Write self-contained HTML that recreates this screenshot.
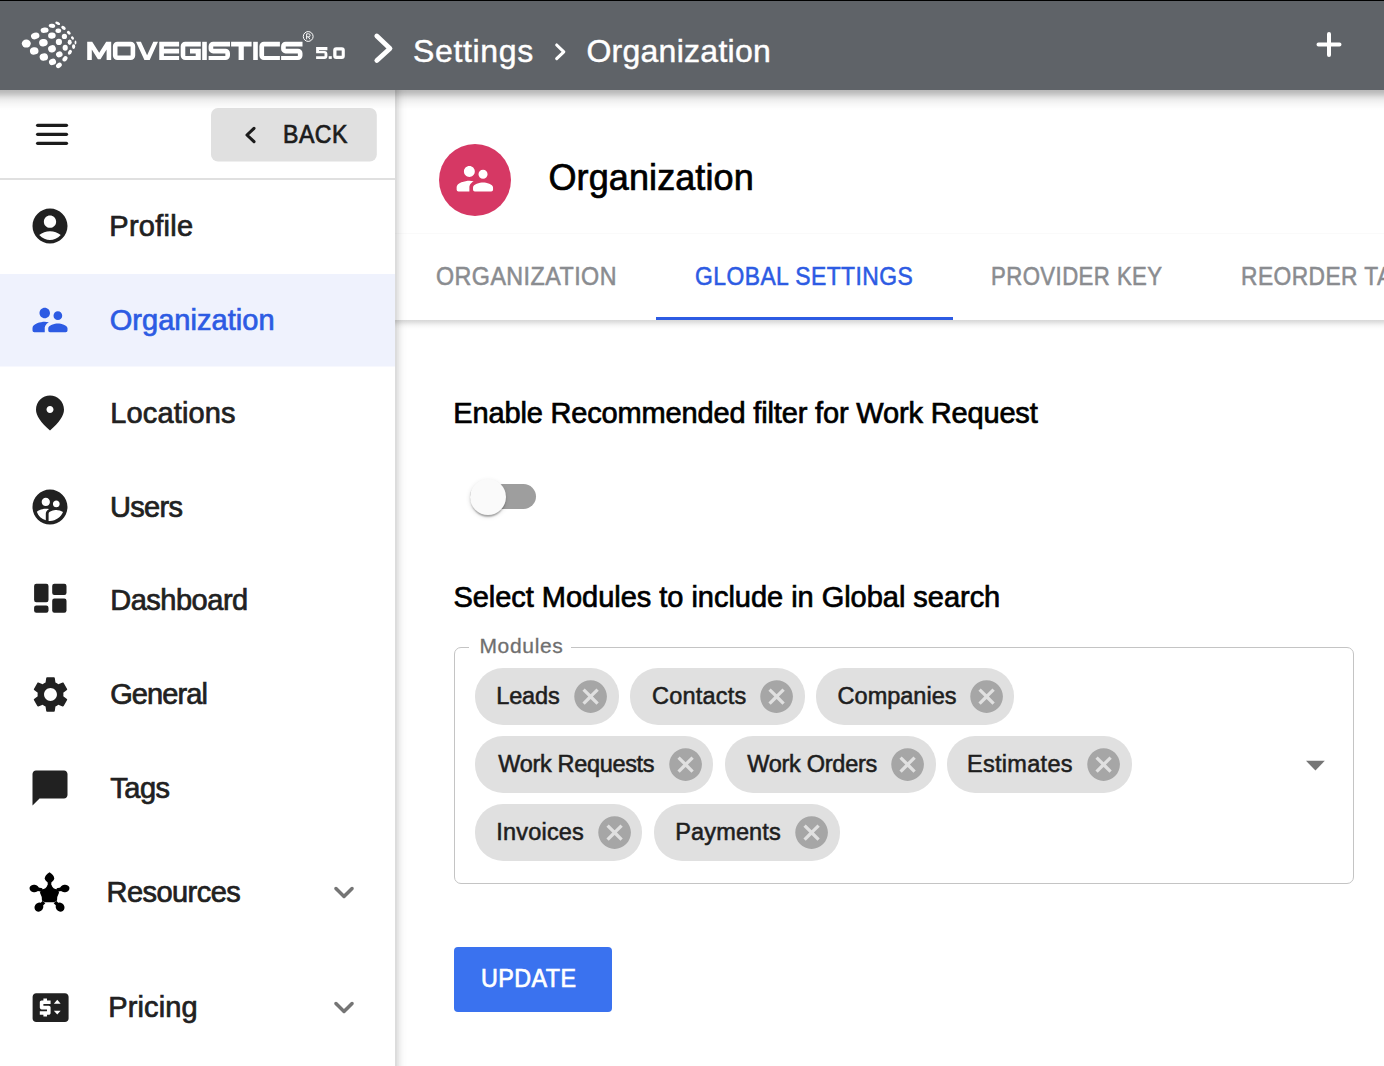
<!DOCTYPE html>
<html>
<head>
<meta charset="utf-8">
<style>
*{box-sizing:border-box;margin:0;padding:0}
html,body{width:1384px;height:1066px;overflow:hidden;background:#fff}
body{position:relative;font-family:"Liberation Sans",sans-serif;color:#212121}
.abs{position:absolute}
.t{position:absolute;white-space:nowrap;line-height:1}
.med{-webkit-text-stroke:0.35px currentColor}
#topline{left:0;top:0;width:1384px;height:1px;background:#000}
#header{left:0;top:1px;width:1384px;height:89px;background:#5f6368;z-index:5}
#hshadow{left:0;top:90px;width:1384px;height:20px;z-index:4;background:linear-gradient(to bottom,rgba(0,0,0,0.28) 0px,rgba(0,0,0,0.26) 2px,rgba(0,0,0,0.19) 5px,rgba(0,0,0,0.13) 7px,rgba(0,0,0,0.07) 10px,rgba(0,0,0,0.03) 14px,rgba(0,0,0,0.008) 18px,rgba(0,0,0,0) 20px)}
#sidebar{left:0;top:90px;width:395px;height:976px;background:#fff}
#sshadow{left:395px;top:90px;width:12px;height:976px;z-index:3;background:linear-gradient(to right,rgba(0,0,0,0.137) 0px,rgba(0,0,0,0.137) 1px,rgba(0,0,0,0.133) 1px,rgba(0,0,0,0.133) 2px,rgba(0,0,0,0.102) 2px,rgba(0,0,0,0.102) 3px,rgba(0,0,0,0.09) 3px,rgba(0,0,0,0.09) 4px,rgba(0,0,0,0.063) 4px,rgba(0,0,0,0.063) 5px,rgba(0,0,0,0.051) 5px,rgba(0,0,0,0.051) 6px,rgba(0,0,0,0.035) 6px,rgba(0,0,0,0.035) 7px,rgba(0,0,0,0.024) 7px,rgba(0,0,0,0.024) 8px,rgba(0,0,0,0.016) 8px,rgba(0,0,0,0.016) 9px,rgba(0,0,0,0.008) 9px,rgba(0,0,0,0.008) 10px,rgba(0,0,0,0.008) 10px,rgba(0,0,0,0.008) 11px,rgba(0,0,0,0.004) 11px,rgba(0,0,0,0.004) 12px)}
.icon{position:absolute;width:42px;height:42px}
.hd{color:#fff;z-index:6;-webkit-text-stroke-width:0.45px}
.lbl{position:absolute;white-space:nowrap;line-height:1;font-size:29px;color:#212121;-webkit-text-stroke-width:0.7px}
.lbl.tab{font-size:25px;color:#8a8c90;z-index:2;-webkit-text-stroke-width:0.55px}
.lbl.blue{color:#2d5be3}
.chip{height:57px;border-radius:28px;background:#e0e0e0}
.lbl.chipt{font-size:23.5px;color:#1e1e1e;-webkit-text-stroke-width:0.55px}
</style>
</head>
<body>
<div id="topline" class="abs"></div>
<div id="header" class="abs"></div>
<svg class="abs" style="left:0;top:0;z-index:6" width="90" height="90" viewBox="0 0 90 90">
    <g fill="#fff">
      <ellipse cx="26.3" cy="43.6" rx="4.5" ry="4"/>
      <ellipse cx="35.2" cy="35.9" rx="4.3" ry="3.3" transform="rotate(-15 35.2 35.9)"/>
      <ellipse cx="34.2" cy="50.9" rx="4.3" ry="3.7" transform="rotate(-10 34.2 50.9)"/>
      <ellipse cx="44.6" cy="30.2" rx="4" ry="2.7" transform="rotate(-8 44.6 30.2)"/>
      <ellipse cx="43.4" cy="42.7" rx="4.3" ry="3.7" transform="rotate(-12 43.4 42.7)"/>
      <ellipse cx="43.8" cy="57" rx="4.2" ry="3.7" transform="rotate(-12 43.8 57)"/>
      <ellipse cx="52" cy="25.8" rx="3.3" ry="2" transform="rotate(10 52 25.8)"/>
      <ellipse cx="51.9" cy="35.6" rx="3.8" ry="3.1" transform="rotate(-5 51.9 35.6)"/>
      <ellipse cx="52" cy="48.8" rx="3.9" ry="3.6" transform="rotate(-20 52 48.8)"/>
      <ellipse cx="52.5" cy="61.9" rx="3.6" ry="3.1" transform="rotate(-20 52.5 61.9)"/>
      <ellipse cx="57.7" cy="23.3" rx="2.6" ry="1.4" transform="rotate(25 57.7 23.3)"/>
      <ellipse cx="58.3" cy="30.8" rx="2.9" ry="2.2" transform="rotate(5 58.3 30.8)"/>
      <ellipse cx="58.9" cy="41.9" rx="3.1" ry="3.1"/>
      <ellipse cx="59.3" cy="54.4" rx="3.3" ry="3" transform="rotate(-25 59.3 54.4)"/>
      <ellipse cx="58.9" cy="65.4" rx="3.1" ry="2.4" transform="rotate(-35 58.9 65.4)"/>
      <ellipse cx="63.5" cy="27.9" rx="2.5" ry="1.6" transform="rotate(35 63.5 27.9)"/>
      <ellipse cx="64.4" cy="36.4" rx="2.6" ry="2.6"/>
      <ellipse cx="65.2" cy="47.8" rx="2.6" ry="3"/>
      <ellipse cx="65" cy="58.8" rx="2.9" ry="2.2" transform="rotate(-50 65 58.8)"/>
      <ellipse cx="68.8" cy="32.8" rx="2.2" ry="1.5" transform="rotate(45 68.8 32.8)"/>
      <ellipse cx="69.7" cy="42.2" rx="2" ry="2.7"/>
      <ellipse cx="69.9" cy="52.3" rx="2.6" ry="1.7" transform="rotate(-55 69.9 52.3)"/>
      <ellipse cx="72.5" cy="38" rx="1.8" ry="1.3" transform="rotate(55 72.5 38)"/>
      <ellipse cx="73.6" cy="46.6" rx="1.6" ry="2.4"/>
      <ellipse cx="75.5" cy="42.5" rx="0.9" ry="2"/>
    </g>
</svg>
<svg class="abs" style="left:0;top:0;z-index:6" width="360" height="90" viewBox="0 0 360 90"><g fill="#fff" fill-rule="evenodd">
<path d="M87.2 60V41.8H92.2L99.2 52.8L106.2 41.8H111.2V60H106.6V49.6L100.5 59.2H97.9L91.8 49.6V60Z"/>
<path d="M117.4 41.8H130.7A4.5 4.5 0 0 1 135.2 46.3V55.5A4.5 4.5 0 0 1 130.7 60H117.4A4.5 4.5 0 0 1 112.9 55.5V46.3A4.5 4.5 0 0 1 117.4 41.8ZM117.5 46.4V55.4H130.6V46.4Z"/>
<path d="M136 41.8H140.9L147.1 55.2L153.3 41.8H158L149.7 60H144.4Z"/>
<path d="M159.25 41.8H179.1V46.5H163.9V48.8H179.1V53.4H163.9V55.9H179.1V60H159.25Z"/>
<path d="M185.2 41.8H200.8V46.5H185.3V55.9H195.7V53.4H190V48.8H200.8V60H185.2A4.5 4.5 0 0 1 180.7 55.5V46.3A4.5 4.5 0 0 1 185.2 41.8Z"/>
<rect x="202.2" y="41.8" width="4.6" height="18.2"/>
<path d="M213.1 41.8H230V46.5H213.25V48.8H225.5A4.5 4.5 0 0 1 230 53.3V55.5A4.5 4.5 0 0 1 225.5 60H208.6V55.9H225.35V53.4H213.1A4.5 4.5 0 0 1 208.6 48.9V46.3A4.5 4.5 0 0 1 213.1 41.8Z"/>
<path d="M231.1 41.8H251.6V46.5H243.8V60H238.6V46.5H231.1Z"/>
<rect x="253.2" y="41.8" width="4.6" height="18.2"/>
<path d="M263.9 41.8H279.9V46.6H264.1V55.9H279.9V60H263.9A4.5 4.5 0 0 1 259.4 55.5V46.3A4.5 4.5 0 0 1 263.9 41.8Z"/>
<path d="M285.6 41.8H302.5V46.5H285.75V48.8H298A4.5 4.5 0 0 1 302.5 53.3V55.5A4.5 4.5 0 0 1 298 60H281.1V55.9H297.85V53.4H285.6A4.5 4.5 0 0 1 281.1 48.9V46.3A4.5 4.5 0 0 1 285.6 41.8Z"/>
<path d="M316.1 47.1H327.4V50.2H319V51.1H324.4A3 3 0 0 1 327.4 54.1V55.9A3 3 0 0 1 324.4 58.9H316.1V56.2H324.5V53.3H316.1Z"/>
<rect x="328.7" y="56.2" width="3.1" height="2.7"/>
<path d="M336.2 47.3H341.8A3 3 0 0 1 344.8 50.3V55.9A3 3 0 0 1 341.8 58.9H336.2A3 3 0 0 1 333.2 55.9V50.3A3 3 0 0 1 336.2 47.3ZM336.5 50.4V55.8H341.7V50.4Z"/>
</g>
<circle cx="308.2" cy="36.5" r="4.9" fill="none" stroke="#fff" stroke-width="1"/>
<path d="M306.6 39.3V33.8H308.6A1.5 1.5 0 0 1 308.6 36.8H306.6M308.3 36.8L310 39.3" fill="none" stroke="#fff" stroke-width="0.95"/>
</svg>
<svg class="abs" style="left:360px;top:0;z-index:6" width="50" height="90" viewBox="0 0 50 90">
    <polyline points="16.8,36 30,48.4 16.8,60.5" fill="none" stroke="#fff" stroke-width="4.8" stroke-linecap="round" stroke-linejoin="round"/>
</svg>
<div class="t hd" style="left:412.9px;top:34.9px;font-size:32px;letter-spacing:0.69px">Settings</div>
<svg class="abs" style="left:540px;top:0;z-index:6" width="40" height="90" viewBox="0 0 40 90">
    <polyline points="16.7,45 23.8,51.9 16.7,58.7" fill="none" stroke="#fff" stroke-width="3.1" stroke-linecap="round" stroke-linejoin="round"/>
</svg>
<div class="t hd" style="left:586.4px;top:35.1px;font-size:32px;letter-spacing:0.27px">Organization</div>
<svg class="abs" style="left:1300px;top:0;z-index:6" width="60" height="90" viewBox="0 0 60 90">
    <path d="M29 34V55M18.5 44.4H39.5" fill="none" stroke="#fff" stroke-width="4" stroke-linecap="round"/>
</svg>
<div id="hshadow" class="abs"></div>

<div id="sidebar" class="abs">
</div>
<!-- hamburger -->
<svg class="abs" style="left:0;top:90px" width="395" height="976" viewBox="0 90 395 976">
  <g stroke="#1c1c1c" stroke-width="3.2" stroke-linecap="round">
    <line x1="37.6" y1="125.3" x2="66.5" y2="125.3"/>
    <line x1="37.6" y1="134.3" x2="66.5" y2="134.3"/>
    <line x1="37.6" y1="143.3" x2="66.5" y2="143.3"/>
  </g>
  <rect x="211" y="108" width="165.8" height="53.6" rx="7" fill="#e0e0e0"/>
  <polyline points="254,128.3 247,135 254,141.7" fill="none" stroke="#1c1c1c" stroke-width="3.1" stroke-linecap="round" stroke-linejoin="round"/>
  <rect x="0" y="178" width="395" height="2" fill="#e0e0e0"/>
  <rect x="0" y="274" width="395" height="92.5" fill="#eff2fd"/>
</svg>
<div class="lbl" style="left:283px;top:121.7px;font-size:25px;letter-spacing:0.5px;color:#1c1c1c;transform:scaleX(0.925);transform-origin:0 0">BACK</div>

<svg class="icon" style="left:29px;top:205.3px" viewBox="0 0 24 24"><path fill="#212121" d="M12 2C6.48 2 2 6.48 2 12s4.48 10 10 10 10-4.48 10-10S17.52 2 12 2zm0 4c1.93 0 3.5 1.57 3.5 3.5S13.93 13 12 13s-3.5-1.57-3.5-3.5S10.07 6 12 6zm0 14c-2.03 0-4.43-.82-6.14-2.88C7.55 15.8 9.68 15 12 15s4.45.8 6.14 2.12C16.43 19.18 14.03 20 12 20z"/></svg>
<div class="lbl" style="left:109.3px;top:212.2px;letter-spacing:0.27px">Profile</div>

<svg class="icon" style="left:29.2px;top:299.3px" viewBox="0 0 24 24"><path fill="#2d5be3" d="M16.5 12c1.38 0 2.49-1.12 2.49-2.5S17.88 7 16.5 7C15.12 7 14 8.12 14 9.5s1.12 2.5 2.5 2.5zM9 11c1.66 0 2.99-1.34 2.99-3S10.66 5 9 5C7.34 5 6 6.34 6 8s1.34 3 3 3zm7.5 3c-1.83 0-5.5.92-5.5 2.75V18a1 1 0 0 0 1 1h9a1 1 0 0 0 1-1v-1.25c0-1.83-3.67-2.75-5.5-2.75zM9 13c-2.33 0-7 1.17-7 3.5V18a1 1 0 0 0 1 1h6v-2.25c0-.85.33-2.34 2.37-3.47C10.5 13.1 9.66 13 9 13z"/></svg>
<div class="lbl" style="left:109.7px;top:306.2px;letter-spacing:0.05px;color:#2d5be3">Organization</div>

<svg class="icon" style="left:29px;top:391.8px" viewBox="0 0 24 24"><path fill="#212121" d="M12 2c-4.2 0-8 3.22-8 8.2 0 3.32 2.67 7.25 8 11.8 5.33-4.55 8-8.48 8-11.8C20 5.22 16.2 2 12 2zm0 10c-1.1 0-2-.9-2-2s.9-2 2-2 2 .9 2 2-.9 2-2 2z"/></svg>
<div class="lbl" style="left:110.2px;top:399.0px;letter-spacing:0.15px">Locations</div>

<svg class="icon" style="left:29px;top:486px" viewBox="0 0 24 24"><path fill="#212121" d="M11.99 2c-5.52 0-10 4.48-10 10s4.48 10 10 10 10-4.48 10-10-4.48-10-10-10zm3.61 6.34c1.07 0 1.93.86 1.93 1.93 0 1.07-.86 1.93-1.93 1.93-1.07 0-1.93-.86-1.93-1.93-.01-1.07.86-1.93 1.930-1.93zm-6-1.58c1.3 0 2.36 1.06 2.36 2.36 0 1.3-1.06 2.36-2.36 2.36s-2.36-1.06-2.36-2.36c0-1.31 1.05-2.36 2.36-2.36zm0 9.13v3.75c-2.4-.75-4.3-2.6-5.14-4.960 1.05-1.12 3.67-1.69 5.14-1.69.53 0 1.2.08 1.9.22-1.64.87-1.9 2.02-1.9 2.68zM11.99 20c-.27 0-.53-.01-.79-.04v-4.07c0-1.42 2.94-2.13 4.4-2.13 1.07 0 2.92.39 3.84 1.15-1.17 2.9-4.01 4.96-7.45 5.09z"/></svg>
<div class="lbl" style="left:109.9px;top:493.1px;letter-spacing:-0.65px">Users</div>

<svg class="abs" style="left:0;top:575px" width="80" height="50" viewBox="0 575 80 50"><g fill="#212121">
  <rect x="34.1" y="583.8" width="14.4" height="18.4" rx="2.2"/>
  <rect x="34.1" y="605.6" width="14.4" height="7.2" rx="2.2"/>
  <rect x="52.2" y="583.8" width="14.3" height="11.1" rx="2.2"/>
  <rect x="52.2" y="598.5" width="14.3" height="14.3" rx="2.2"/>
</g></svg>
<div class="lbl" style="left:110.2px;top:586.1px;letter-spacing:-0.48px">Dashboard</div>

<svg class="icon" style="left:28.8px;top:672.8px;width:43px;height:43px" viewBox="0 0 24 24"><path fill="#212121" d="M19.14 12.94c.04-.3.06-.61.06-.94 0-.32-.02-.64-.07-.94l2.03-1.58c.18-.14.23-.41.12-.61l-1.92-3.32c-.12-.22-.37-.29-.59-.22l-2.39.96c-.5-.38-1.03-.7-1.62-.94l-.36-2.54c-.04-.24-.24-.41-.48-.41h-3.84c-.24 0-.43.17-.47.41l-.36 2.54c-.59.24-1.13.57-1.62.94l-2.39-.96c-.22-.08-.47 0-.59.22L2.74 8.87c-.12.21-.08.47.12.61l2.03 1.58c-.05.3-.09.63-.09.94s.02.64.07.94l-2.03 1.58c-.18.14-.23.41-.12.61l1.92 3.32c.12.22.37.29.59.22l2.39-.96c.5.38 1.03.7 1.62.94l.36 2.54c.05.24.24.41.48.41h3.84c.24 0 .44-.17.47-.41l.36-2.54c.59-.24 1.13-.56 1.62-.94l2.39.96c.22.08.47 0 .59-.22l1.92-3.32c.12-.22.07-.47-.12-.61l-2.01-1.58zM12 15.6c-1.98 0-3.6-1.62-3.6-3.6s1.62-3.6 3.6-3.6 3.6 1.62 3.6 3.6-1.62 3.6-3.6 3.6z"/></svg>
<div class="lbl" style="left:110.2px;top:679.8px;letter-spacing:-0.92px">General</div>

<svg class="icon" style="left:29.3px;top:767.3px" viewBox="0 0 24 24"><path fill="#212121" d="M20 2H4c-1.1 0-2 .9-2 2v18l4-4h14c1.1 0 2-.9 2-2V4c0-1.1-.9-2-2-2z"/></svg>
<div class="lbl" style="left:110.2px;top:773.7px;letter-spacing:-0.46px">Tags</div>

<svg class="abs" style="left:20px;top:865px" width="60" height="60" viewBox="20 865 60 60"><g fill="#000">
  <path d="M47.60 885.00L51.40 885.00Q52.97 889.36 57.61 889.20L59.02 892.73Q56.8 896.5 57.05 900.58L54.13 902.3Q49.50 902.3 44.87 902.3L41.95 900.58Q42.2 896.5 39.98 892.73L41.39 889.20Q46.03 889.36 47.60 885.00Z"/>
  <g stroke="#000" stroke-width="3.6">
  <path d="M49.5 886L49.5 878"/><path d="M57 890L64.7 888.4"/><path d="M55 902L60.1 907.2"/><path d="M44 902L38.9 907.2"/><path d="M42 890L34.3 888.4"/>
  </g>
  <path d="M49.5 872.2C46.5 874.2 44.8 876.3 44.8 878.2C44.8 880.2 46.6 881.8 49.5 883.2C52.4 881.8 54.2 880.2 54.2 878.2C54.2 876.3 52.5 874.2 49.5 872.2Z"/>
  <ellipse cx="34.2" cy="888.5" rx="4.7" ry="3.8" transform="rotate(8 34.2 888.5)"/>
  <ellipse cx="64.8" cy="888.5" rx="4.7" ry="3.8" transform="rotate(-8 64.8 888.5)"/>
  <ellipse cx="38.9" cy="907.1" rx="4.3" ry="4.7" transform="rotate(35 38.9 907.1)"/>
  <ellipse cx="60.1" cy="907.1" rx="4.3" ry="4.7" transform="rotate(-35 60.1 907.1)"/>
</g></svg>
<div class="lbl" style="left:106.5px;top:878.0px;letter-spacing:-0.55px">Resources</div>
<svg class="icon" style="left:323.3px;top:871px" viewBox="0 0 24 24"><path fill="#757575" d="M15.88 9.29 12 13.17 8.12 9.29a.9959.9959 0 0 0-1.41 0c-.39.39-.39 1.02 0 1.41l4.59 4.59c.39.39 1.02.39 1.41 0l4.59-4.59c.39-.39.39-1.02 0-1.41-.39-.38-1.03-.39-1.42 0z"/></svg>

<svg class="icon" style="left:29.2px;top:986.3px;width:43.2px;height:43.2px" viewBox="0 0 24 24"><path fill="#212121" d="M20 4H4c-1.11 0-1.99.89-1.99 2L2 18c0 1.11.89 2 2 2h16c1.11 0 2-.89 2-2V6c0-1.11-.89-2-2-2zm-8 6H8v1h3c.55 0 1 .45 1 1v3c0 .55-.45 1-1 1h-1v1H8v-1H6v-2h4v-1H7c-.55 0-1-.45-1-1V9c0-.55.45-1 1-1h1V7h2v1h2v2z"/><path fill="#fff" d="M13.8 9.8L15.7 7.7L17.6 9.8ZM13.8 13.7L15.7 15.9L17.6 13.7Z"/></svg>
<div class="lbl" style="left:108.3px;top:993.2px;letter-spacing:0.1px">Pricing</div>
<svg class="icon" style="left:323.3px;top:986px" viewBox="0 0 24 24"><path fill="#757575" d="M15.88 9.29 12 13.17 8.12 9.29a.9959.9959 0 0 0-1.41 0c-.39.39-.39 1.02 0 1.41l4.59 4.59c.39.39 1.02.39 1.41 0l4.59-4.59c.39-.39.39-1.02 0-1.41-.39-.38-1.03-.39-1.42 0z"/></svg>
<div id="sshadow" class="abs"></div>


<div id="main" class="abs" style="left:397px;top:90px;width:987px;height:976px"></div>
<div class="abs" style="left:439.1px;top:143.8px;width:72px;height:72px;border-radius:50%;background:#d63864"></div>
<svg class="abs" style="left:453.2px;top:157px" width="43.7" height="43.7" viewBox="0 0 24 24"><path fill="#fff" d="M16.5 12c1.38 0 2.49-1.12 2.49-2.5S17.88 7 16.5 7C15.12 7 14 8.12 14 9.5s1.12 2.5 2.5 2.5zM9 11c1.66 0 2.99-1.34 2.99-3S10.66 5 9 5C7.34 5 6 6.34 6 8s1.34 3 3 3zm7.5 3c-1.83 0-5.5.92-5.5 2.75V18a1 1 0 0 0 1 1h9a1 1 0 0 0 1-1v-1.25c0-1.83-3.67-2.75-5.5-2.75zM9 13c-2.33 0-7 1.17-7 3.5V18a1 1 0 0 0 1 1h6v-2.25c0-.85.33-2.34 2.37-3.47C10.5 13.1 9.66 13 9 13z"/></svg>
<div class="lbl" style="left:548.5px;top:160.2px;font-size:36px;letter-spacing:0.1px;color:#000">Organization</div>

<div id="tabbar" class="abs" style="left:395px;top:233px;width:989px;height:87px;background:#fff;border-top:1px solid rgba(0,0,0,0.018);z-index:1"></div>
<div class="abs" style="left:395px;top:320px;width:989px;height:10px;z-index:1;background:linear-gradient(to bottom,rgba(0,0,0,0.155) 0px,rgba(0,0,0,0.12) 2px,rgba(0,0,0,0.07) 4px,rgba(0,0,0,0.03) 6px,rgba(0,0,0,0.01) 8px,rgba(0,0,0,0) 10px)"></div>
<div class="lbl tab" style="left:435.7px;top:263.7px;letter-spacing:0.5px;transform:scaleX(0.9304);transform-origin:0 0">ORGANIZATION</div>
<div class="lbl tab blue" style="left:695.4px;top:263.6px;letter-spacing:0.5px;transform:scaleX(0.9148);transform-origin:0 0">GLOBAL SETTINGS</div>
<div class="lbl tab" style="left:991.3px;top:263.8px;letter-spacing:0.5px;transform:scaleX(0.8864);transform-origin:0 0">PROVIDER KEY</div>
<div class="lbl tab" style="left:1241px;top:263.8px;letter-spacing:0.5px;transform:scaleX(0.91);transform-origin:0 0">REORDER TABS</div>
<div class="abs" style="left:655.6px;top:317px;width:297.2px;height:3px;background:#2d5be3;z-index:2"></div>

<div class="lbl" style="left:453.3px;top:398.7px;letter-spacing:-0.16px;color:#000">Enable Recommended filter for Work Request</div>
<!-- toggle -->
<div class="abs" style="left:470px;top:483.8px;width:66px;height:25.2px;border-radius:12.6px;background:#9e9e9e"></div>
<div class="abs" style="left:470px;top:479px;width:36px;height:36px;border-radius:50%;background:#fafafa;box-shadow:0 3.5px 1.75px -1.75px rgba(0,0,0,0.2),0 1.75px 1.75px 0 rgba(0,0,0,0.14),0 1.75px 5.25px 0 rgba(0,0,0,0.12)"></div>

<div class="lbl" style="left:453.4px;top:582.5px;letter-spacing:-0.03px;color:#000">Select Modules to include in Global search</div>

<!-- outlined autocomplete -->
<div class="abs" style="left:454px;top:647px;width:900px;height:237px;border:1.5px solid #c4c4c4;border-radius:7px"></div>
<div class="abs" style="left:468.9px;top:640px;width:102.6px;height:12px;background:#fff"></div>
<div class="lbl" style="left:479.4px;top:634.9px;font-size:21px;letter-spacing:0.68px;color:#6f6f6f;-webkit-text-stroke-width:0.3px">Modules</div>
<svg class="abs" style="left:1300px;top:755px" width="30" height="20" viewBox="1300 755 30 20"><polygon points="1306,760.8 1324.8,760.8 1315.4,770.4" fill="#757575"/></svg>

<div class="abs chip" style="left:475.1px;top:668.2px;width:143.7px"></div>
<div class="lbl chipt" style="left:496.2px;top:685.1px;letter-spacing:-0.12px">Leads</div>
<svg class="abs" style="left:571.2px;top:676.8px" width="39.2" height="39.2" viewBox="0 0 24 24"><path fill="#a6a6a6" d="M12 2C6.47 2 2 6.47 2 12s4.47 10 10 10 10-4.47 10-10S17.53 2 12 2zm5 13.59L15.59 17 12 13.41 8.41 17 7 15.59 10.59 12 7 8.41 8.41 7 12 10.59 15.59 7 17 8.41 13.41 12 17 15.59z"/></svg>
<div class="abs chip" style="left:630.2px;top:668.2px;width:174.5px"></div>
<div class="lbl chipt" style="left:652.0px;top:685.1px;letter-spacing:0.21px">Contacts</div>
<svg class="abs" style="left:757.1px;top:676.8px" width="39.2" height="39.2" viewBox="0 0 24 24"><path fill="#a6a6a6" d="M12 2C6.47 2 2 6.47 2 12s4.47 10 10 10 10-4.47 10-10S17.53 2 12 2zm5 13.59L15.59 17 12 13.41 8.41 17 7 15.59 10.59 12 7 8.41 8.41 7 12 10.59 15.59 7 17 8.41 13.41 12 17 15.59z"/></svg>
<div class="abs chip" style="left:816px;top:668.2px;width:198.3px"></div>
<div class="lbl chipt" style="left:837.6px;top:685.1px;letter-spacing:0px">Companies</div>
<svg class="abs" style="left:966.7px;top:676.8px" width="39.2" height="39.2" viewBox="0 0 24 24"><path fill="#a6a6a6" d="M12 2C6.47 2 2 6.47 2 12s4.47 10 10 10 10-4.47 10-10S17.53 2 12 2zm5 13.59L15.59 17 12 13.41 8.41 17 7 15.59 10.59 12 7 8.41 8.41 7 12 10.59 15.59 7 17 8.41 13.41 12 17 15.59z"/></svg>
<div class="abs chip" style="left:475.2px;top:736.2px;width:238.2px"></div>
<div class="lbl chipt" style="left:498.3px;top:753.1px;letter-spacing:-0.33px">Work Requests</div>
<svg class="abs" style="left:665.8px;top:744.8px" width="39.2" height="39.2" viewBox="0 0 24 24"><path fill="#a6a6a6" d="M12 2C6.47 2 2 6.47 2 12s4.47 10 10 10 10-4.47 10-10S17.53 2 12 2zm5 13.59L15.59 17 12 13.41 8.41 17 7 15.59 10.59 12 7 8.41 8.41 7 12 10.59 15.59 7 17 8.41 13.41 12 17 15.59z"/></svg>
<div class="abs chip" style="left:725.3px;top:736.2px;width:210.6px"></div>
<div class="lbl chipt" style="left:747.3px;top:753.1px;letter-spacing:-0.28px">Work Orders</div>
<svg class="abs" style="left:888.3px;top:744.8px" width="39.2" height="39.2" viewBox="0 0 24 24"><path fill="#a6a6a6" d="M12 2C6.47 2 2 6.47 2 12s4.47 10 10 10 10-4.47 10-10S17.53 2 12 2zm5 13.59L15.59 17 12 13.41 8.41 17 7 15.59 10.59 12 7 8.41 8.41 7 12 10.59 15.59 7 17 8.41 13.41 12 17 15.59z"/></svg>
<div class="abs chip" style="left:946.8px;top:736.2px;width:185.2px"></div>
<div class="lbl chipt" style="left:967.0px;top:753.1px;letter-spacing:0.29px">Estimates</div>
<svg class="abs" style="left:1084.4px;top:744.8px" width="39.2" height="39.2" viewBox="0 0 24 24"><path fill="#a6a6a6" d="M12 2C6.47 2 2 6.47 2 12s4.47 10 10 10 10-4.47 10-10S17.53 2 12 2zm5 13.59L15.59 17 12 13.41 8.41 17 7 15.59 10.59 12 7 8.41 8.41 7 12 10.59 15.59 7 17 8.41 13.41 12 17 15.59z"/></svg>
<div class="abs chip" style="left:475.2px;top:804.2px;width:167.1px"></div>
<div class="lbl chipt" style="left:496.2px;top:821.1px;letter-spacing:0.21px">Invoices</div>
<svg class="abs" style="left:594.7px;top:812.8px" width="39.2" height="39.2" viewBox="0 0 24 24"><path fill="#a6a6a6" d="M12 2C6.47 2 2 6.47 2 12s4.47 10 10 10 10-4.47 10-10S17.53 2 12 2zm5 13.59L15.59 17 12 13.41 8.41 17 7 15.59 10.59 12 7 8.41 8.41 7 12 10.59 15.59 7 17 8.41 13.41 12 17 15.59z"/></svg>
<div class="abs chip" style="left:654.2px;top:804.2px;width:185.8px"></div>
<div class="lbl chipt" style="left:675.3px;top:821.1px;letter-spacing:0.13px">Payments</div>
<svg class="abs" style="left:792.4px;top:812.8px" width="39.2" height="39.2" viewBox="0 0 24 24"><path fill="#a6a6a6" d="M12 2C6.47 2 2 6.47 2 12s4.47 10 10 10 10-4.47 10-10S17.53 2 12 2zm5 13.59L15.59 17 12 13.41 8.41 17 7 15.59 10.59 12 7 8.41 8.41 7 12 10.59 15.59 7 17 8.41 13.41 12 17 15.59z"/></svg>

<div class="abs" style="left:454.2px;top:947px;width:157.8px;height:65px;border-radius:4px;background:#3a72ef"></div>
<div class="lbl" style="left:481.4px;top:965.9px;font-size:25px;letter-spacing:0.5px;color:#fff;transform:scaleX(0.9313);transform-origin:0 0">UPDATE</div>

</body>
</html>
